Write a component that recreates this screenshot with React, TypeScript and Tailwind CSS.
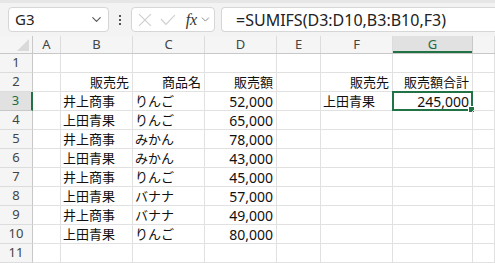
import { ChevronDown } from "lucide-react";

const cols = [
  { key: "A", w: "w-[28px]" },
  { key: "B", w: "w-[72px]" },
  { key: "C", w: "w-[72px]" },
  { key: "D", w: "w-[72px]" },
  { key: "E", w: "w-[44px]" },
  { key: "F", w: "w-[72px]" },
  { key: "G", w: "w-[80px]" },
  { key: "", w: "flex-1" },
];

type Cell = { v: string; align?: "l" | "r"; num?: boolean };

const rows: Record<number, Record<string, Cell>> = {
  2: {
    B: { v: "販売先", align: "r" },
    C: { v: "商品名", align: "r" },
    D: { v: "販売額", align: "r" },
    F: { v: "販売先", align: "r" },
    G: { v: "販売額合計", align: "r" },
  },
  3: { B: { v: "井上商事" }, C: { v: "りんご" }, D: { v: "52,000", align: "r", num: true }, F: { v: "上田青果" }, G: { v: "245,000", align: "r", num: true } },
  4: { B: { v: "上田青果" }, C: { v: "りんご" }, D: { v: "65,000", align: "r", num: true } },
  5: { B: { v: "井上商事" }, C: { v: "みかん" }, D: { v: "78,000", align: "r", num: true } },
  6: { B: { v: "上田青果" }, C: { v: "みかん" }, D: { v: "43,000", align: "r", num: true } },
  7: { B: { v: "井上商事" }, C: { v: "りんご" }, D: { v: "45,000", align: "r", num: true } },
  8: { B: { v: "上田青果" }, C: { v: "バナナ" }, D: { v: "57,000", align: "r", num: true } },
  9: { B: { v: "井上商事" }, C: { v: "バナナ" }, D: { v: "49,000", align: "r", num: true } },
  10: { B: { v: "上田青果" }, C: { v: "りんご" }, D: { v: "80,000", align: "r", num: true } },
};

const jp = { fontFamily: '"Noto Sans CJK JP", "Noto Sans", sans-serif' };
const ui = { fontFamily: '"Noto Sans", "Open Sans", sans-serif' };

const App = () => {
  return (
    <div className="w-[495px] h-[263px] overflow-hidden bg-white flex flex-col">
      {/* formula bar strip */}
      <div className="h-[40px] bg-[#f3f3f3] border-t-[3px] border-[#e6e6e6] flex items-start pt-[4px] pl-[8px]">
        <div className="w-[101px] h-[25px] bg-white border border-[#d6d6d6] rounded-[4px] flex items-center justify-between pl-[6px] pr-[4px]">
          <span className="text-[15px] text-[#222]" style={ui}>G3</span>
          <ChevronDown size={15} strokeWidth={1.8} className="text-[#555]" />
        </div>
        <div className="w-[22px] h-[25px] flex flex-col items-center justify-center gap-[2px]">
          <span className="w-[2px] h-[2px] bg-[#555]" />
          <span className="w-[2px] h-[2px] bg-[#555]" />
          <span className="w-[2px] h-[2px] bg-[#555]" />
        </div>
        <div className="w-[84px] h-[25px] bg-white border border-[#d6d6d6] rounded-[4px] flex items-center pl-[6px] pr-[2px]">
          <svg width="14" height="14" viewBox="0 0 14 14" className="mr-[8px]">
            <path d="M1 1 L13 13 M13 1 L1 13" stroke="#cfcfcf" strokeWidth="1.2" fill="none" />
          </svg>
          <svg width="16" height="12" viewBox="0 0 16 12" className="mr-[10px]">
            <path d="M1 5 L6 10.5 L15 1" stroke="#cfcfcf" strokeWidth="1.2" fill="none" />
          </svg>
          <span className="text-[16px] italic text-[#333] leading-none" style={{ fontFamily: '"Liberation Serif", serif' }}>fx</span>
          <ChevronDown size={13} strokeWidth={1.6} className="text-[#777] ml-[2px]" />
        </div>
        <div className="ml-[6px] flex-1 h-[25px] bg-white border border-[#d6d6d6] border-r-0 rounded-l-[4px] flex items-center pl-[14px]">
          <span className="text-[16px] text-[#222]" style={ui}>=SUMIFS(D3:D10,B3:B10,F3)</span>
        </div>
      </div>

      {/* column headers */}
      <div className="h-[18px] flex bg-[#f5f5f5] border-b border-[#c8c8c8]">
        <div className="w-[33px] border-r border-[#c8c8c8] relative">
          <svg width="12" height="12" viewBox="0 0 12 12" className="absolute right-[3px] bottom-[2px]">
            <path d="M12 0 L12 12 L0 12 Z" fill="#dadada" />
          </svg>
        </div>
        {cols.map((c, i) => (
          <div
            key={i}
            className={`${c.w} flex items-center justify-center text-[13px] border-r ${
              c.key === "G"
                ? "bg-[#e1e1e1] text-[#1e6b41] border-[#c8c8c8] shadow-[inset_0_-2px_0_#217346]"
                : "text-[#444] border-[#dcdcdc]"
            }`}
            style={ui}
          >
            {c.key}
          </div>
        ))}
      </div>

      {/* rows */}
      {Array.from({ length: 11 }, (_, i) => i + 1).map((r) => (
        <div key={r} className="h-[19px] flex shrink-0">
          <div
            className={`w-[33px] flex items-center justify-center text-[13px] border-b border-r ${
              r === 3
                ? "bg-[#e1e1e1] text-[#1e6b41] border-b-[#c8c8c8] border-r-[#217346] border-r-2"
                : "bg-[#f5f5f5] text-[#444] border-[#dcdcdc] border-r-[#c8c8c8]"
            }`}
            style={ui}
          >
            {r}
          </div>
          {cols.map((c, i) => {
            const cell = rows[r]?.[c.key];
            const selected = r === 3 && c.key === "G";
            return (
              <div
                key={i}
                className={`${c.w} relative border-r border-b border-[#e1e1e1] flex items-center text-[#111] whitespace-nowrap ${
                  cell?.align === "r" ? "justify-end pr-[3px]" : "justify-start pl-[2px]"
                } ${cell?.num ? "text-[14px]" : "text-[13px]"}`}
                style={cell?.num ? ui : jp}
              >
                {cell?.v}
                {selected && (
                  <>
                    <div className="absolute -left-[1px] -top-[1px] -right-[1px] -bottom-[1px] border-2 border-[#217346]" />
                    <div className="absolute -right-[3px] -bottom-[3px] w-[5px] h-[5px] bg-[#217346] border border-white box-content" />
                  </>
                )}
              </div>
            );
          })}
        </div>
      ))}
    </div>
  );
};

export default App;
